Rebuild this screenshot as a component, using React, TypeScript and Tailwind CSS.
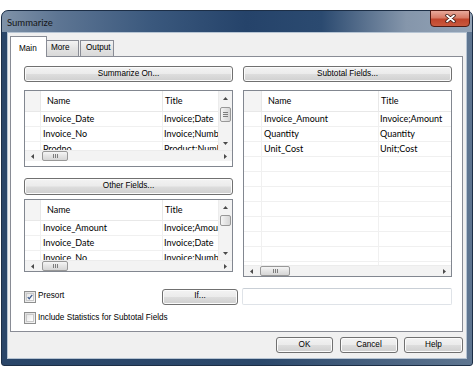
import React from "react";

type Row = [string, string];

const BTN =
  "flex items-center justify-center rounded-[3px] border border-[#707070] bg-[linear-gradient(180deg,#f3f3f3_0%,#ebebeb_48%,#dddddd_52%,#cfcfcf_100%)] text-[8.2px] leading-none text-black shadow-[inset_0_0_0_1px_#fbfbfb]";

function Arrow({ dir }: { dir: "up" | "down" | "left" | "right" }) {
  const vertical = dir === "up" || dir === "down";
  const pts = {
    up: "0,3 2.5,0 5,3",
    down: "0,0 5,0 2.5,3",
    left: "3,0 3,5 0,2.5",
    right: "0,0 0,5 3,2.5",
  }[dir];
  return (
    <svg width={vertical ? 5 : 3} height={vertical ? 3 : 5} viewBox={vertical ? "0 0 5 3" : "0 0 3 5"}>
      <polygon points={pts} fill="#4a4a4a" />
    </svg>
  );
}

function VScroll({ thumb, grip }: { thumb: string; grip?: boolean }) {
  return (
    <div className="w-[14px] flex flex-col bg-[#f3f3f3] border-l border-[#ececec]">
      <div className="h-[14px] flex items-center justify-center">
        <Arrow dir="up" />
      </div>
      <div className="flex-1 px-[1px]">
        <div
          className={
            "rounded-[2px] border border-[#989898] bg-[linear-gradient(90deg,#f5f5f5,#e4e4e4_50%,#d6d6d6)] flex flex-col items-center justify-center gap-[1px] " +
            thumb
          }
        >
          {grip && (
            <>
              <div className="w-[5px] h-px bg-[#7d7d7d]" />
              <div className="w-[5px] h-px bg-[#7d7d7d]" />
              <div className="w-[5px] h-px bg-[#7d7d7d]" />
            </>
          )}
        </div>
      </div>
      <div className="h-[14px] flex items-center justify-center">
        <Arrow dir="down" />
      </div>
    </div>
  );
}

function HScroll({ thumb }: { thumb: string }) {
  return (
    <div className="h-[11px] shrink-0 flex items-center bg-[#f3f3f3] border-t border-[#ececec]">
      <div className="w-[14px] flex items-center justify-center">
        <Arrow dir="left" />
      </div>
      <div className="flex-1 flex items-center">
        <div
          className={
            "h-[10px] rounded-[2px] border border-[#989898] bg-[linear-gradient(180deg,#f5f5f5,#e4e4e4_50%,#d6d6d6)] flex items-center justify-center gap-[1px] " +
            thumb
          }
        >
          <div className="w-px h-[4px] bg-[#7d7d7d]" />
          <div className="w-px h-[4px] bg-[#7d7d7d]" />
          <div className="w-px h-[4px] bg-[#7d7d7d]" />
        </div>
      </div>
      <div className="w-[14px] flex items-center justify-center">
        <Arrow dir="right" />
      </div>
    </div>
  );
}

function Grid({
  rows,
  box,
  nameCol,
  firstCol,
  vscroll,
  thumbV,
  grip,
  thumbH,
  fill,
  bottomPad,
}: {
  rows: Row[];
  box: string;
  nameCol: string;
  firstCol: string;
  vscroll: boolean;
  thumbV?: string;
  grip?: boolean;
  thumbH: string;
  fill?: number;
  bottomPad?: string;
}) {
  const all: Row[] = [...rows];
  for (let i = 0; i < (fill ?? 0); i++) all.push(["", ""]);
  return (
    <div className={"border border-[#828790] bg-white flex flex-col overflow-hidden font-['Lato',sans-serif] " + box}>
      <div className="flex flex-1 min-h-0">
        <div className="flex-1 min-w-0 overflow-hidden flex flex-col">
          <div className="h-[21px] shrink-0 flex border-b border-[#e8e8e8] text-[9px]">
            <div className={"shrink-0 bg-[#f4f4f4] border-r border-[#e8e8e8] " + firstCol} />
            <div className={"shrink-0 flex items-center pl-[6px] border-r border-[#e8e8e8] " + nameCol}>Name</div>
            <div className="flex-1 flex items-center pl-[2px] whitespace-nowrap">Title</div>
          </div>
          {all.map((r, i) => (
            <div key={i} className="h-[15px] shrink-0 flex border-b border-[#f0f0f0] text-[9px]">
              <div className={"shrink-0 border-r border-[#f0f0f0] " + firstCol} />
              <div className={"shrink-0 flex items-center pl-[2px] border-r border-[#f0f0f0] whitespace-nowrap " + nameCol}>
                {r[0]}
              </div>
              <div className="flex-1 flex items-center pl-[1px] whitespace-nowrap overflow-hidden">{r[1]}</div>
            </div>
          ))}
        </div>
        {vscroll && <VScroll thumb={thumbV ?? ""} grip={grip} />}
      </div>
      <HScroll thumb={thumbH} />
      {bottomPad && <div className={"shrink-0 bg-white " + bottomPad} />}
    </div>
  );
}

function Check({ checked }: { checked?: boolean }) {
  return (
    <div className="w-[12px] h-[12px] border border-[#8e8f8f] bg-[linear-gradient(135deg,#dcdcdc,#f6f6f6)] p-[1px] shrink-0">
      <div className="w-full h-full border border-[#c9c9c9] bg-[linear-gradient(135deg,#e6e6e6,#ffffff)] flex items-center justify-center">
        {checked && (
          <svg width="8" height="8" viewBox="0 0 8 8">
            <path d="M1 4.2 L3 6.3 L7 1.2" fill="none" stroke="#3c5a8c" strokeWidth="1.6" />
          </svg>
        )}
      </div>
    </div>
  );
}

export default function App() {
  return (
    <div className="w-[475px] h-[377px] bg-white pt-[10px] pl-[1px] font-['Liberation_Sans',Arial,sans-serif] text-black select-none">
      <div className="w-[472px] h-[356px] rounded-t-[7px] rounded-b-[3px] border border-[#1c2e46] bg-[linear-gradient(90deg,#2a4669,#2b486b_55%,#5f7691)] flex flex-col">
        {/* title bar */}
        <div className="h-[21px] shrink-0 flex items-start justify-between rounded-t-[6px] bg-[linear-gradient(90deg,#7f92a8_0%,#5d7593_12%,#3a587d_32%,#25436a_52%,#2b4a70_68%,#8596ab_86%,#93a3b6_100%)]">
          <span className="mt-[5px] ml-[5px] text-[9.5px] text-[#151515] font-['Lato',sans-serif]">Summarize</span>
          <div className="mt-[-1px] mr-[2px] w-[40px] h-[17px] rounded-b-[4px] border border-[#4f1a12] bg-[linear-gradient(180deg,#e7a99b_0%,#d77b66_45%,#c0452c_55%,#c9593e_100%)] flex items-center justify-center">
            <svg width="11" height="9" viewBox="0 0 11 9">
              <path d="M2 1.5 L9 7.5 M9 1.5 L2 7.5" stroke="#3a1610" strokeWidth="3.4" strokeLinecap="round" />
              <path d="M2 1.5 L9 7.5 M9 1.5 L2 7.5" stroke="#ffffff" strokeWidth="1.8" strokeLinecap="round" />
            </svg>
          </div>
        </div>

        {/* client area */}
        <div className="mx-[5px] mb-[6px] flex-1 border border-[#b6c4d3] bg-[#f0f0f0] flex flex-col">
          {/* tabs */}
          <div className="mt-[3px] ml-[2px] h-[20px] flex items-end text-[8.2px]">
            <div className="relative z-10 h-[21px] w-[37px] mb-[-1px] border border-b-0 border-[#898c95] bg-white flex items-start pt-[6px] pl-[8px]">
              Main
            </div>
            <div className="h-[16px] w-[32px] border-t border-r border-[#898c95] bg-[linear-gradient(180deg,#f3f3f3,#e3e3e3_50%,#d9d9d9)] flex items-center pl-[4px]">
              More
            </div>
            <div className="ml-px h-[16px] w-[34px] border-t border-x border-[#898c95] bg-[linear-gradient(180deg,#f3f3f3,#e3e3e3_50%,#d9d9d9)] flex items-center pl-[5px]">
              Output
            </div>
          </div>

          {/* tab panel */}
          <div className="ml-[2px] w-[453px] h-[276px] border border-[#898c95] bg-white pt-[9px] pl-[13px] pr-[10px] flex flex-col">
            <div className="flex gap-[10px]">
              <div className="w-[209px] flex flex-col">
                <div className={BTN + " h-[16px]"}>Summarize On...</div>
                <Grid
                  box="mt-[8px] h-[77px]"
                  firstCol="w-[16px]"
                  nameCol="w-[122px]"
                  vscroll
                  grip
                  thumbV="mt-[2px] h-[15px]"
                  thumbH="ml-[3px] w-[26px]"
                  bottomPad="h-[5px]"
                  rows={[
                    ["Invoice_Date", "Invoice;Date"],
                    ["Invoice_No", "Invoice;Number"],
                    ["Prodno", "Product;Number"],
                  ]}
                />
                <div className={BTN + " mt-[11px] h-[17px]"}>Other Fields...</div>
                <Grid
                  box="mt-[4px] h-[73px]"
                  firstCol="w-[16px]"
                  nameCol="w-[122px]"
                  vscroll
                  thumbV="mt-[1px] h-[11px]"
                  thumbH="ml-[3px] w-[26px]"
                  rows={[
                    ["Invoice_Amount", "Invoice;Amount"],
                    ["Invoice_Date", "Invoice;Date"],
                    ["Invoice_No", "Invoice;Number"],
                  ]}
                />
              </div>
              <div className="w-[209px] flex flex-col">
                <div className={BTN + " h-[16px]"}>Subtotal Fields...</div>
                <Grid
                  box="mt-[8px] h-[187px]"
                  firstCol="w-[18px]"
                  nameCol="w-[117px]"
                  vscroll={false}
                  thumbH="ml-[2px] w-[30px]"
                  fill={10}
                  rows={[
                    ["Invoice_Amount", "Invoice;Amount"],
                    ["Quantity", "Quantity"],
                    ["Unit_Cost", "Unit;Cost"],
                  ]}
                />
              </div>
            </div>

            {/* presort row */}
            <div className="mt-[11px] flex items-center gap-[4px]">
              <div className="w-[214px] flex items-center">
                <Check checked />
                <span className="ml-[2px] text-[8.2px]">Presort</span>
                <div className={BTN + " ml-auto w-[76px] h-[16px]"}>If...</div>
              </div>
              <div className="flex-1 h-[17px] rounded-[2px] border border-[#dfe3e8] border-t-[#c9cfd6] bg-white" />
            </div>
            <div className="mt-[7px] flex items-center">
              <Check />
              <span className="ml-[2px] text-[8.2px]">Include Statistics for Subtotal Fields</span>
            </div>
          </div>

          {/* dialog buttons */}
          <div className="mt-[5px] mr-[3px] flex justify-end">
            <div className={BTN + " w-[57px] h-[16px] border-[#3c7fb1]"}>OK</div>
            <div className={BTN + " ml-[7px] w-[58px] h-[16px]"}>Cancel</div>
            <div className={BTN + " ml-[6px] w-[59px] h-[16px]"}>Help</div>
          </div>
        </div>
      </div>
    </div>
  );
}
